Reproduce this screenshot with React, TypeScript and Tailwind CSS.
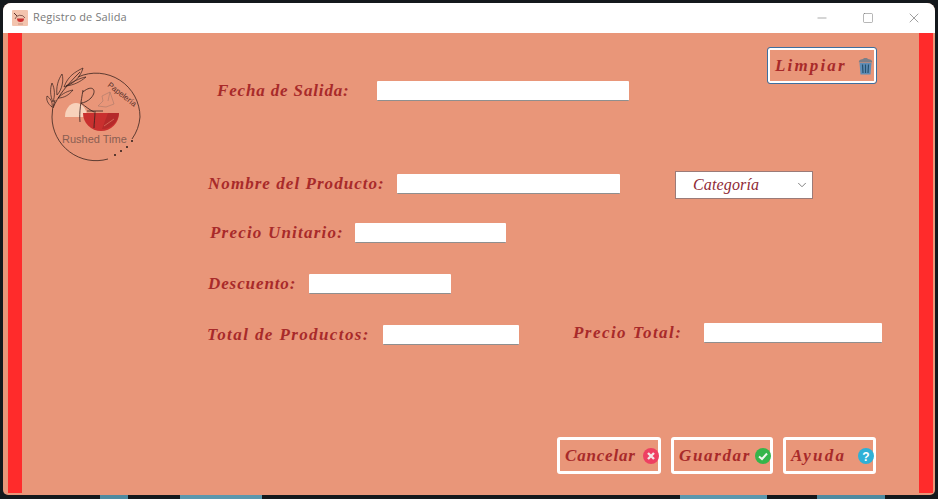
import type { ReactNode } from "react";
import { ChevronDown, Minus, Square, X } from "lucide-react";

const hand = "[font-family:'Liberation_Serif',serif] italic font-bold text-[#a82a2a] text-[17px] leading-[20px] whitespace-nowrap";

function Field({ className }: { className: string }) {
  return <div className={`h-[20px] bg-white border-b border-[#8f8f8f] rounded-[1px] shrink-0 ${className}`} />;
}

function Logo() {
  return (
    <svg width="110" height="105" viewBox="0 0 110 105" fill="none" className="shrink-0 ml-[18px] mt-[27px]">
      <path d="M25 57 A11 14 0 0 1 47 57 Z" fill="#f8d2bb" />
      <path d="M43 53 H79 A18 18 0 0 1 43 53 Z" fill="#c9302f" />
      <path d="M62 69 A18 18 0 0 0 79 53 H68 Z" fill="#b52a2a" />
      <path d="M38 17 A44 44 0 0 1 100 57 A44 44 0 0 1 92 79" stroke="#3a2420" strokeWidth="0.8" />
      <path d="M68 99 A44 44 0 0 1 12 57 A44 44 0 0 1 15 40" stroke="#3a2420" strokeWidth="0.8" />
      <path d="M13 48 C18 36 26 26 40 12" stroke="#33201c" strokeWidth="0.8" />
      <path d="M24 27 C28 16 35 12 43 8 C41 16 34 24 24 27 Z M26 26 C32 22 40 18 46 17 C40 22 34 25 26 26 Z M17 35 C16 27 18 20 22 14 C24 20 22 30 17 35 Z M13 42 C10 36 10 28 12 23 C15 29 15 36 13 42 Z M12 47 C8 44 6 40 7 36 C10 38 13 42 12 47 Z M18 38 C23 33 28 31 33 30 C29 35 24 38 18 38 Z" stroke="#33201c" strokeWidth="0.7" />
      <path d="M43 30 C41 42 39 52 40 62 M43 32 C52 24 58 30 51 38 C48 41 44 43 41 43 C46 47 50 50 54 52 M47 51 H63 M55 51 C55 58 54 63 54 68" stroke="#33201c" strokeWidth="0.8" />
      <path d="M62 36 L70 32 L74 44 L66 47 L58 46 L63 41 Z M70 32 L68 41" stroke="#a8796a" strokeWidth="0.6" />
      <path d="M64 66 L74 59" stroke="#e68a70" strokeWidth="0.6" />
      <text x="67" y="26" fontSize="8" fill="#5c332c" fontFamily="'Liberation Sans',sans-serif" transform="rotate(38 67 26)">Papelería</text>
      <text x="22" y="83" fontSize="11" fill="#8a5e52" fontFamily="'Liberation Sans',sans-serif">Rushed Time</text>
      <circle cx="92" cy="81" r="1" fill="#2a1a18" />
      <circle cx="87" cy="87" r="1" fill="#2a1a18" />
      <circle cx="81" cy="91" r="1" fill="#2a1a18" />
      <circle cx="75" cy="95" r="1" fill="#2a1a18" />
    </svg>
  );
}

function WindowIcon() {
  return (
    <svg width="16" height="16" viewBox="0 0 16 16" fill="none" className="shrink-0">
      <rect width="16" height="16" rx="1" fill="#f3c4ae" />
      <path d="M3 9 A5.500 5.500 0 0 1 13 8" stroke="#5c332c" strokeWidth="0.7" />
      <path d="M2 3 L5 6" stroke="#5c332c" strokeWidth="1" />
      <path d="M5 8.500 H12 A3.500 3.500 0 0 1 5 8.500 Z" fill="#c9302f" />
      <path d="M6 14 H11" stroke="#b98a7a" strokeWidth="0.8" />
    </svg>
  );
}

function TrashIcon() {
  return (
    <svg width="15" height="18" viewBox="0 0 15 18">
      <path d="M5 2 C5 0.5 10 0.5 10 2 L12 2.5 C14 3 14.5 5 14 5.500 L1 5.500 C0.500 5 1 3 3 2.500 Z" fill="#7b7f88" />
      <path d="M1.500 6 H13.500 L12.500 17.500 H2.500 Z" fill="#5f8db5" />
      <path d="M4.500 7.500 L5 16 M7.500 7.500 V16 M10.500 7.500 L10 16" stroke="#23506f" strokeWidth="1.200" />
    </svg>
  );
}

function CircleIcon({ color, children }: { color: string; children: ReactNode }) {
  return (
    <svg width="16" height="16" viewBox="0 0 16 16" className="shrink-0 -mr-[1px]">
      <circle cx="8" cy="8" r="8" fill={color} />
      {children}
    </svg>
  );
}

function ActionButton({ label, className, labelClass, icon }: { label: string; className: string; labelClass: string; icon: ReactNode }) {
  return (
    <div className={`h-[37px] border-[3px] border-white rounded-[3px] flex items-center justify-between pl-[5px] ${className}`}>
      <span className={`${hand} ${labelClass}`}>{label}</span>
      {icon}
    </div>
  );
}

export default function App() {
  return (
    <div className="w-[938px] h-[499px] bg-[#14181c] flex flex-col overflow-hidden">
      <div className="h-[3px] shrink-0" />
      <div className="flex-1 min-h-0 mx-[3px] flex flex-col rounded-t-[8px] rounded-b-[5px] overflow-hidden bg-[#e99679]">
        <div className="h-[30px] bg-white flex items-center shrink-0 pl-[9px] pb-[1px]">
          <WindowIcon />
          <span className="ml-[5px] text-[11px] text-[#7a7a7a] tracking-[0.15px] [font-family:'Open_Sans',sans-serif]">Registro de Salida</span>
          <div className="ml-auto flex items-center text-[#6f6f6f]">
            <Minus size={14} strokeWidth={1} className="mr-[33px]" />
            <Square size={12} strokeWidth={1} className="mr-[32px]" />
            <X size={16} strokeWidth={1} className="mr-[13px]" />
          </div>
        </div>
        <div className="flex-1 flex min-h-0 pl-[5px] pr-[2px]">
          <div className="w-[14px] bg-[#ff2b2b] shrink-0 mb-[2px]" />
          <div className="flex-1 flex flex-col min-w-0 pb-[21px]">
            <div className="flex">
              <div className="w-[186px] shrink-0">
                <Logo />
              </div>
              <div className="flex-1 flex flex-col">
                <div className="h-[138px] flex justify-between items-start">
                  <div className="flex items-center mt-[48px] ml-[9px]">
                    <span className={`${hand} w-[160px] tracking-[0.85px]`}>Fecha de Salida:</span>
                    <Field className="w-[252px]" />
                  </div>
                  <div className="w-[110px] h-[37px] mt-[14px] mr-[42px] border border-[#3d6f9f] shadow-[inset_0_0_0_2px_#ffffff] rounded-[3px] flex items-center justify-between pl-[7px] pr-[3px]">
                    <span className={`${hand} tracking-[2.15px]`}>Limpiar</span>
                    <TrashIcon />
                  </div>
                </div>
                <div className="flex items-start">
                  <div className="flex items-center mt-[3px]">
                    <span className={`${hand} w-[189px] tracking-[1.05px]`}>Nombre del Producto:</span>
                    <Field className="w-[223px]" />
                  </div>
                  <div className="ml-[55px] w-[138px] h-[28px] bg-white border border-[#9b7b78] flex items-center justify-between pl-[17px] pr-[3px]">
                    <span className="[font-family:'Liberation_Serif',serif] italic text-[#8f2a35] text-[16px] tracking-[0.15px]">Categoría</span>
                    <ChevronDown size={14} strokeWidth={1.5} className="text-[#6f6f6f]" />
                  </div>
                </div>
                <div className="flex items-center mt-[24px] ml-[2px]">
                  <span className={`${hand} w-[145px] tracking-[1.2px]`}>Precio Unitario:</span>
                  <Field className="w-[151px]" />
                </div>
                <div className="flex items-center mt-[31px]">
                  <span className={`${hand} w-[101px] tracking-[0.9px]`}>Descuento:</span>
                  <Field className="w-[142px]" />
                </div>
                <div className="flex items-start mt-[29px] -ml-[1px]">
                  <div className="flex items-center mt-[2px]">
                    <span className={`${hand} w-[176px] tracking-[1.4px]`}>Total de Productos:</span>
                    <Field className="w-[136px]" />
                  </div>
                  <div className="flex items-center ml-[54px]">
                    <span className={`${hand} w-[131px] tracking-[1.45px]`}>Precio Total:</span>
                    <Field className="w-[178px]" />
                  </div>
                </div>
              </div>
            </div>
            <div className="mt-auto flex justify-end gap-[10px] mr-[43px]">
              <ActionButton
                label="Cancelar"
                className="w-[104px]"
                labelClass="tracking-[0.8px]"
                icon={
                  <CircleIcon color="#ee3f62">
                    <path d="M5 5 L11 11 M11 5 L5 11" stroke="#f3e6e6" strokeWidth="2.400" />
                  </CircleIcon>
                }
              />
              <ActionButton
                label="Guardar"
                className="w-[102px]"
                labelClass="tracking-[1.65px]"
                icon={
                  <CircleIcon color="#35b54a">
                    <path d="M4 8.500 L7 11 L12 5.500" stroke="#eef7ee" strokeWidth="2" fill="none" />
                  </CircleIcon>
                }
              />
              <ActionButton
                label="Ayuda"
                className="w-[93px]"
                labelClass="tracking-[2.2px]"
                icon={
                  <CircleIcon color="#2fb0d6">
                    <text x="8" y="12.500" textAnchor="middle" fontSize="12" fontWeight="700" fill="#ffffff" fontFamily="'Liberation Sans',sans-serif">?</text>
                  </CircleIcon>
                }
              />
            </div>
          </div>
          <div className="w-[14px] bg-[#ff2b2b] shrink-0 mb-[2px]" />
        </div>
      </div>
      <div className="h-[4px] shrink-0 flex">
        <div className="ml-[100px] w-[28px] bg-[#4e8aa0]" />
        <div className="ml-[52px] w-[82px] bg-[#5a97ad]" />
        <div className="ml-[418px] w-[87px] bg-[#5a97ad]" />
        <div className="ml-[50px] w-[68px] bg-[#4e8aa0]" />
      </div>
    </div>
  );
}
